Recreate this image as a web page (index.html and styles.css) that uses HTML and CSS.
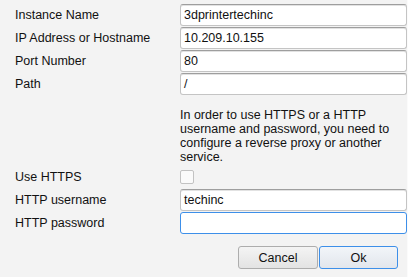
FILE: index.html
```html
<!DOCTYPE html>
<html>
<head>
<meta charset="utf-8">
<link rel="stylesheet" href="styles.css">
</head>
<body>
<div class="dialog">
  <div class="form">
    <label class="lbl">Instance Name</label>
    <div class="field">3dprintertechinc</div>
    <label class="lbl">IP Address or Hostname</label>
    <div class="field">10.209.10.155</div>
    <label class="lbl">Port Number</label>
    <div class="field">80</div>
    <label class="lbl">Path</label>
    <div class="field">/</div>
    <p class="note">In order to use HTTPS or a HTTP<br>username and password, you need to<br>configure a reverse proxy or another<br>service.</p>
    <label class="lbl tall">Use HTTPS</label>
    <div class="check-cell tall"><span class="check"></span></div>
    <label class="lbl">HTTP username</label>
    <div class="field">techinc</div>
    <label class="lbl">HTTP password</label>
    <div class="field focus"></div>
  </div>
  <div class="buttons">
    <button class="btn">Cancel</button>
    <button class="btn primary">Ok</button>
  </div>
</div>
</body>
</html>
```
FILE: styles.css
```css
html, body {
  margin: 0;
  padding: 0;
  background: #f3f3f3;
}
body {
  width: 408px;
  height: 277px;
  overflow: hidden;
  font-family: "Liberation Sans", Arial, sans-serif;
  font-size: 12.5px;
  color: #111;
}
.dialog {
  padding-top: 4px;
  border-right: 1px solid #fbfbfb;
  width: 407px;
  height: 273px;
}
.form {
  display: grid;
  grid-template-columns: 165px 227px;
  row-gap: 1px;
  padding-left: 15px;
}
.lbl {
  display: flex;
  align-items: center;
  height: 22px;
  line-height: 14px;
}
.field {
  box-sizing: border-box;
  height: 22px;
  background: #fff;
  border: 1px solid #c4c4c4;
  border-top-color: #9e9e9e;
  box-shadow: inset 0 1px 0 #e2e2e2;
  border-radius: 3px;
  padding: 0 3px;
  display: flex;
  align-items: center;
  line-height: 14px;
}
.field.focus {
  border-color: #3d8fe9;
  box-shadow: none;
}
.note {
  grid-column: 2;
  margin: 12px 0 0;
  line-height: 14px;
  height: 56px;
  white-space: nowrap;
}
.tall {
  height: 23px;
}
.check-cell {
  display: flex;
  align-items: center;
}
.check {
  box-sizing: border-box;
  width: 14px;
  height: 14px;
  border: 1px solid #c2c2c2;
  background: #fafafa;
  border-radius: 2px;
}
.buttons {
  display: flex;
  justify-content: flex-end;
  gap: 1px;
  margin-top: 12px;
  padding-right: 9px;
}
.btn {
  box-sizing: border-box;
  width: 80px;
  height: 23px;
  font-family: "Liberation Sans", Arial, sans-serif;
  font-size: 12.5px;
  color: #111;
  background: linear-gradient(#f4f4f4, #e3e3e3);
  border: 1px solid #adadad;
  border-radius: 3px;
  padding: 0;
}
.btn.primary {
  width: 79px;
  border-color: #3d8fe9;
  background: linear-gradient(#f2f5f9, #e2e6ec);
}
```
